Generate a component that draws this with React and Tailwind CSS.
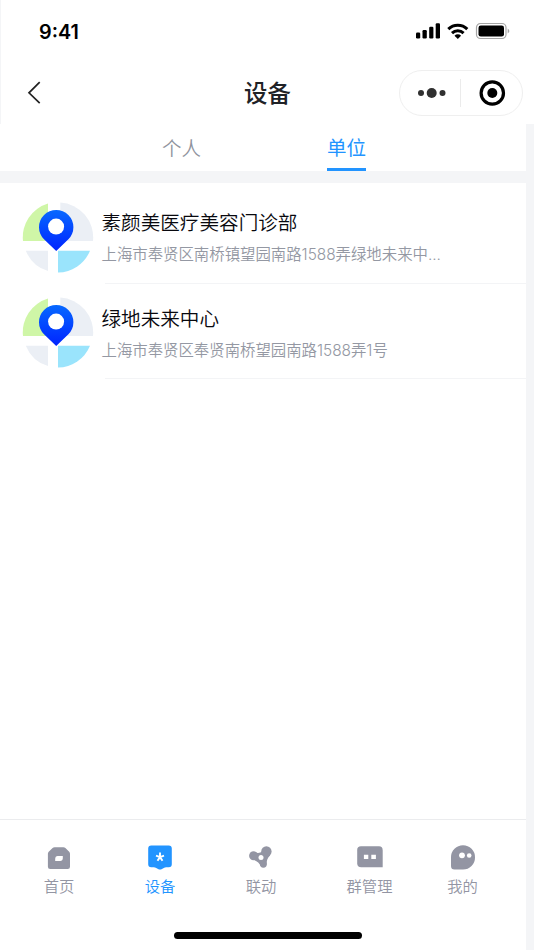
import React from "react";

const places = [
  { name: "素颜美医疗美容门诊部", address: "上海市奉贤区南桥镇望园南路1588弄绿地未来中..." },
  { name: "绿地未来中心", address: "上海市奉贤区奉贤南桥望园南路1588弄1号" },
];

const navItems = [
  { name: "首页", icon: <HomeIcon />, width: "w-[101px]" },
  { name: "设备", icon: <DeviceIcon />, width: "w-[101px]", active: true },
  { name: "联动", icon: <LinkIcon />, width: "w-[101px]" },
  { name: "群管理", icon: <GroupIcon />, width: "w-[116px]" },
  { name: "我的", icon: <MeIcon />, width: "w-[70px]" },
];

function HomeIcon() {
  return (
    <svg className="w-[26px] h-[26px]" viewBox="0 0 26 26">
      <path
        fill="currentColor"
        d="M8.6 2.2h8.8q1.2 0 2 .8l3.8 3.7q.8.8.8 2v13.1q0 2.3-2.3 2.3H4.2q-2.3 0-2.3-2.3V8.700q0-1.200.8-2l3.900-3.700q.8-.8 2-.8z"
      />
      <path fill="#fff" d="M11.700 11.100h5.100v2q0 3-2.700 3H9.200v-2q0-3 2.500-3z" />
    </svg>
  );
}

function DeviceIcon() {
  return (
    <svg className="w-[26px] h-[26px]" viewBox="0 0 26 26">
      <path
        fill="currentColor"
        d="M4.3.5h17.4Q24.8.5 24.8 3.6v15.600q0 3-3 3h-2.600q-1.300 0-2.400.7l-2.300 1.300q-1.500.8-3 0l-2.300-1.300q-1.100-.7-2.400-.7H4.200q-3 0-3-3V3.600Q1.200.5 4.300.5z"
      />
      <path
        stroke="#fff"
        strokeWidth="1.9"
        fill="none"
        d="M13 7.600v4.500M9 10.700l4 1.400M17 10.700l-4 1.400M10.500 15.700l2.500-3.600M15.500 15.700L13 12.100"
      />
    </svg>
  );
}

function LinkIcon() {
  return (
    <svg className="w-[26px] h-[26px]" viewBox="0 0 26 26">
      <path fill="currentColor" d="M6.5 7q4 2 8-.5l7.500 4q-3.500 3-3.400 8.500l-6 2q-1.500-4-6.500-6z" />
      <circle cx="13" cy="12.500" r="2.500" fill="#fff" />
      <g fill="currentColor">
        <circle cx="5.600" cy="10.700" r="4.500" />
        <circle cx="18.400" cy="6.500" r="5.200" />
        <circle cx="15.400" cy="19.300" r="3.400" />
      </g>
    </svg>
  );
}

function GroupIcon() {
  return (
    <svg className="w-[26px] h-[26px]" viewBox="0 0 26 26">
      <path
        fill="currentColor"
        d="M4 1.300h18q3.700 0 3.700 4V22.300H4.200q-4 0-4-4V5Q.2 1.300 4 1.300z"
      />
      <path fill="#fff" d="M6.900 9.700h4.400v4.300H6.900zM14.300 9.700h4.600v4.300h-4.600z" />
    </svg>
  );
}

function MeIcon() {
  return (
    <svg className="w-[26px] h-[26px]" viewBox="0 0 26 26">
      <path
        fill="currentColor"
        d="M13 .2a12 12 0 0 1 12 12.300a12 12 0 0 1-12 12.100H4.500Q1 24.600 1 21V12.200A12 12 0 0 1 13 .2z"
      />
      <circle cx="12" cy="10.300" r="2.900" fill="#fff" />
      <circle cx="19.200" cy="10.500" r="2.300" fill="#fff" />
    </svg>
  );
}

function MapPin({ id }) {
  return (
    <svg className="w-[72px] h-[72px] shrink-0" viewBox="0 0 72 72">
      <defs>
        <linearGradient id={id} x1="0" y1="0" x2="0" y2="1">
          <stop offset="0" stopColor="#0768ff" />
          <stop offset="1" stopColor="#0024ff" />
        </linearGradient>
      </defs>
      <path fill="#cff6a7" d="M26 1.600V39H1A35 35 0 0 1 26 1.600z" />
      <path fill="#ebeff5" d="M38.300.5A35 35 0 0 1 71 39H38.300z" />
      <path fill="#ebeff5" d="M3.800 48.700H26v20.400A35 35 0 0 1 3.800 48.700z" />
      <path fill="#9ae4fc" d="M36 48.700h32A35 35 0 0 1 36 70.500z" />
      <path
        fill={`url(#${id})`}
        d="M34.200 49L22 37.300A17.200 17.200 0 1 1 46.400 37.300z"
      />
      <circle cx="34.100" cy="24.600" r="8" fill="#fff" />
    </svg>
  );
}

function StatusBar() {
  return (
    <div className="flex items-center justify-between h-[62px] pl-[38px] pr-6">
      <span className="pt-[3px] font-['Inter'] font-semibold text-[19.8px] leading-none">9:41</span>
      <svg className="w-[94px] h-[18px]" viewBox="0 0 94 18">
        <rect x="0" y="10.500" width="4.200" height="6" rx="1.200" />
        <rect x="6.500" y="8" width="4.300" height="8.500" rx="1.200" />
        <rect x="13.200" y="4.700" width="4.200" height="11.800" rx="1.200" />
        <rect x="19.700" y="1.300" width="4.300" height="15.200" rx="1.200" />
        <g fill="none" stroke="#000" strokeWidth="3">
          <path d="M32.300 7.100a13.500 13.500 0 0 1 19 0" />
          <path d="M36 11.100a8.400 8.400 0 0 1 11.600 0" />
        </g>
        <path d="M38.500 13.700a4.700 4.700 0 0 1 6.600 0L41.800 17z" />
        <rect x="60.500" y="1.500" width="29.500" height="15" rx="4" fill="none" stroke="#a5a5a5" strokeWidth="1.200" />
        <rect x="62.500" y="3.500" width="25.500" height="11" rx="2.300" />
        <path fill="#a5a5a5" d="M91.700 6.400q3.300 2.600 0 5.200z" />
      </svg>
    </div>
  );
}

function Header() {
  return (
    <div className="grid grid-cols-[1fr_auto_1fr] items-center h-[62px] pl-[26px] pr-[11px]">
      <svg className="w-[14px] h-6" viewBox="0 0 14 24" fill="none" stroke="#222" strokeWidth="1.7">
        <path d="M12.700 1.200L2 11.800l10.700 10.300" />
      </svg>
      <h1 className="text-[23.4px] leading-none font-medium text-[#202226] -translate-x-[7.5px]">设备</h1>
      <div className="flex items-center justify-self-end w-[124px] h-[46px] rounded-full border border-[#efefef]">
        <svg className="w-full h-full" viewBox="0 0 122 44">
          <g fill="#303030">
            <circle cx="21" cy="22" r="3" />
            <circle cx="31.700" cy="22" r="5" />
            <circle cx="42.500" cy="22" r="3" />
          </g>
          <path stroke="#ebebeb" d="M60.500 8v28" />
          <circle cx="92.300" cy="22" r="11.200" fill="none" stroke="#000" strokeWidth="3.200" />
          <circle cx="92.300" cy="22" r="5" />
        </svg>
      </div>
    </div>
  );
}

export default function App() {
  return (
    <div className="flex flex-col w-[534px] h-[950px] overflow-hidden bg-[#f4f5f7] font-['Noto_Sans_CJK_SC',sans-serif]">
      <header className="h-[124px] bg-white border-l border-[#f4f5f7]">
        <StatusBar />
        <Header />
      </header>

      <div className="flex flex-col flex-1 w-[526px]">
        {/* Tabs */}
        <div className="flex h-[47.4px] bg-white pl-[162px] gap-[126px] text-[19.5px] leading-[46px]">
          <button className="font-[350] text-[#8f939d]">个人</button>
          <button className="font-normal text-[#2294ff] border-b-[3px] border-[#2294ff]">单位</button>
        </div>

        {/* Place list */}
        <main className="flex-1 mt-[11.6px] pt-[5.1px] bg-white">
          {places.map((place, i) => (
            <div key={place.name} className="flex h-[95.6px] pl-[22px]">
              <div className="pt-[13.8px]">
                <MapPin id={`pin-${i}`} />
              </div>
              <div className="flex flex-col flex-1 ml-[7.5px]">
                <h2 className="pt-[20.2px] text-[19.6px] leading-7 font-[350] text-[#08080e]">{place.name}</h2>
                <p className="mt-[6px] text-[15.4px] leading-[26px] font-[350] text-[#9498a3] font-['Inter','Noto_Sans_CJK_SC',sans-serif]">
                  {place.address}
                </p>
                <div className="mt-auto ml-[3.5px] h-px bg-[#f3f4f6]" />
              </div>
            </div>
          ))}
        </main>

        {/* Bottom navigation */}
        <nav className="h-[131px] bg-white border-t border-[#ebecee]">
          <div className="flex pt-[25px] pl-[8.5px]">
            {navItems.map((item) => (
              <div
                key={item.name}
                className={`flex flex-col items-center ${item.width} ${
                  item.active ? "text-[#2294ff]" : "text-[#9395a3]"
                }`}
              >
                {item.icon}
                <span className="mt-[3px] mb-px text-[15.3px] leading-[22px] font-[350]">{item.name}</span>
              </div>
            ))}
          </div>
          <div className="mt-[35px] ml-[174px] w-[188px] h-[7px] rounded-full bg-black" />
        </nav>
      </div>
    </div>
  );
}
